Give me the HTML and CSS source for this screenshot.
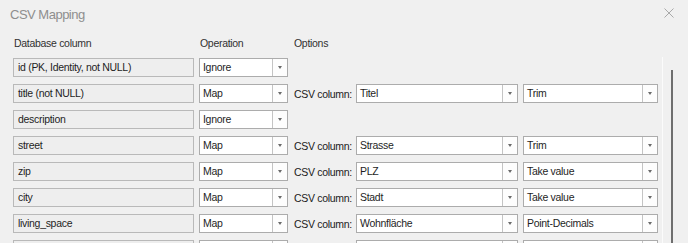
FILE: index.html
```html
<!DOCTYPE html>
<html lang="en">
<head>
  <meta charset="UTF-8">
  <title>CSV Mapping</title>
  <link rel="stylesheet" href="styles.css">
</head>
<body>
  <div class="dialog">
    <div class="titlebar">
      <span class="title">CSV Mapping</span>
      <svg class="close" width="10" height="10" viewBox="0 0 10 10">
        <path d="M0.5 0.5 L9.5 9.5 M9.5 0.5 L0.5 9.5" stroke="#a9a9a9" stroke-width="1" fill="none"/>
      </svg>
    </div>

    <div class="cols head">
      <span>Database column</span>
      <span>Operation</span>
      <span class="opts">Options</span>
    </div>

    <div class="main">
      <div class="cols rows">
        <div class="field">id (PK, Identity, not NULL)</div>
        <div class="combo"><span>Ignore</span><i></i></div>
        <div class="empty"></div>

        <div class="field">title (not NULL)</div>
        <div class="combo"><span>Map</span><i></i></div>
        <div class="lbl">CSV column:</div>
        <div class="combo"><span>Titel</span><i></i></div>
        <div class="combo"><span>Trim</span><i></i></div>

        <div class="field">description</div>
        <div class="combo"><span>Ignore</span><i></i></div>
        <div class="empty"></div>

        <div class="field">street</div>
        <div class="combo"><span>Map</span><i></i></div>
        <div class="lbl">CSV column:</div>
        <div class="combo"><span>Strasse</span><i></i></div>
        <div class="combo"><span>Trim</span><i></i></div>

        <div class="field">zip</div>
        <div class="combo"><span>Map</span><i></i></div>
        <div class="lbl">CSV column:</div>
        <div class="combo"><span>PLZ</span><i></i></div>
        <div class="combo"><span>Take value</span><i></i></div>

        <div class="field">city</div>
        <div class="combo"><span>Map</span><i></i></div>
        <div class="lbl">CSV column:</div>
        <div class="combo"><span>Stadt</span><i></i></div>
        <div class="combo"><span>Take value</span><i></i></div>

        <div class="field">living_space</div>
        <div class="combo"><span>Map</span><i></i></div>
        <div class="lbl">CSV column:</div>
        <div class="combo"><span>Wohnfläche</span><i></i></div>
        <div class="combo"><span>Point-Decimals</span><i></i></div>

        <div class="field"></div>
        <div class="combo"><span></span><i></i></div>
        <div class="lbl"></div>
        <div class="combo"><span></span><i></i></div>
        <div class="combo"><span></span><i></i></div>
      </div>
      <div class="scrollbar"><div class="thumb"></div></div>
    </div>
  </div>
</body>
</html>
```

FILE: styles.css
```css
body { margin: 0; background: #f0f0f0; font-family: Tahoma, "Liberation Sans", Arial, sans-serif; font-size: 10.5px; letter-spacing: -0.3px; color: #1e1e1e; height: 243px; overflow: hidden; }
.dialog { width: 688px; }

.titlebar { height: 28px; display: flex; align-items: center; justify-content: space-between; padding: 0 14px 0 10px; }
.title { font-size: 13px; letter-spacing: -0.5px; color: #8e8e8e; }
.close { display: block; margin-top: -2px; }

.cols { display: grid; grid-template-columns: 181px 89px 58px 162px 135px; column-gap: 5px; padding-left: 13px; }
.head { margin-top: 8px; height: 14px; line-height: 14px; color: #303030; }
.head span { padding-left: 1px; }
.head .opts { grid-column: 3 / 5; }

.main { display: flex; margin-top: 8px; }
.rows { grid-auto-rows: 19px; row-gap: 7px; align-items: center; }

.field { box-sizing: border-box; height: 19px; line-height: 17px; padding-left: 4px; border: 1px solid #b9b9b9; background: #eeeeee; white-space: nowrap; overflow: hidden; }
.combo { box-sizing: border-box; height: 19px; display: flex; border: 1px solid #acacac; background: #fff; }
.combo span { flex: 1; line-height: 17px; padding-left: 3px; white-space: nowrap; overflow: hidden; }
.combo i { width: 14px; border-left: 1px solid #c4c4c4; background: #fdfdfd; position: relative; }
.combo i::after { content: ""; position: absolute; left: 5px; top: 7px; border-left: 2.5px solid transparent; border-right: 2.5px solid transparent; border-top: 3px solid #6a6a6a; }
.lbl { padding-left: 1px; color: #202020; white-space: nowrap; }
.empty { grid-column: 3 / 6; }

.scrollbar { margin-left: 4px; margin-top: -1px; width: 16px; height: 200px; border-left: 1px solid #fbfbfb; position: relative; }
.thumb { position: absolute; left: 8px; top: 13px; width: 2px; height: 200px; background: #6e6e6e; }
```
